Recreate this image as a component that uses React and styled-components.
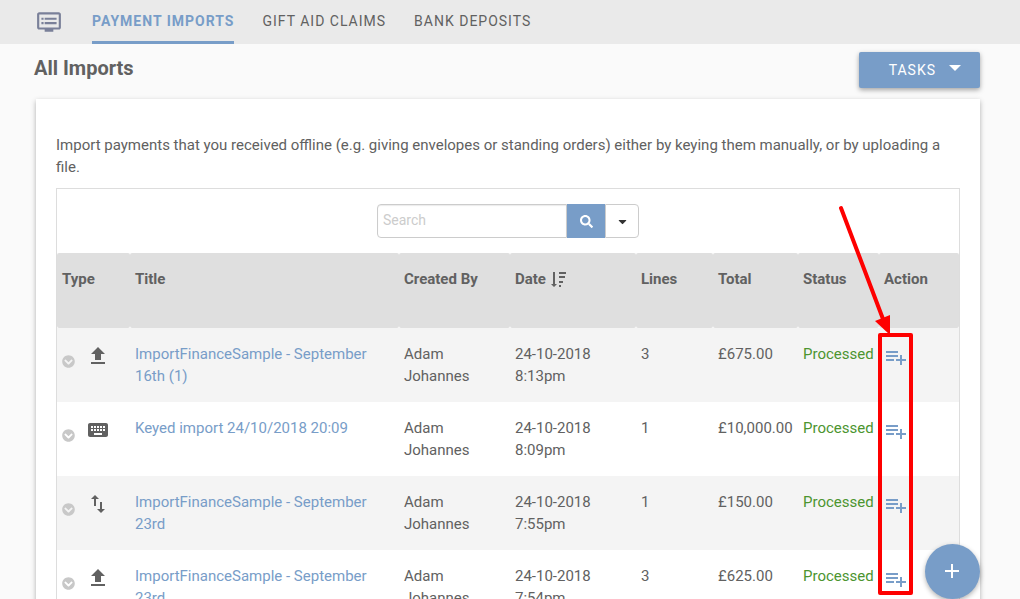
import styled, { createGlobalStyle } from 'styled-components';
import { FaSearch, FaCaretDown, FaChevronCircleDown } from 'react-icons/fa';
import { MdDvr, MdKeyboard, MdImportExport } from 'react-icons/md';

const blue = '#789dc8';

const GlobalStyle = createGlobalStyle`
  * {
    box-sizing: border-box;
  }

  body {
    margin: 0;
    background: #fafafa;
    color: #616161;
    font-family: Roboto, "Liberation Sans", sans-serif;
    font-size: 15px;
    line-height: 22px;
  }

  button, input {
    font-family: inherit;
    font-size: inherit;
  }
`;

// top navigation
const NavBar = styled.nav`
  display: flex;
  align-items: center;
  gap: 28px;
  height: 44px;
  padding: 0 36px;
  background: #eaeaea;
`;

const NavIcon = styled.span`
  display: flex;
  padding-right: 2px;
  color: #7a8099;
`;

const NavLink = styled.a`
  height: 44px;
  line-height: 42px;
  font-size: 14px;
  letter-spacing: 1px;
  text-decoration: none;
  text-transform: uppercase;
  font-weight: ${(props) => (props.$active ? 700 : 400)};
  color: ${(props) => (props.$active ? blue : '#616161')};
  border-bottom: 3px solid ${(props) => (props.$active ? blue : 'transparent')};
`;

const Page = styled.main`
  padding: 8px 40px 0 36px;
`;

const PageHeader = styled.div`
  display: flex;
  justify-content: space-between;
  align-items: flex-start;
  margin-bottom: 11px;
`;

const PageTitle = styled.h1`
  margin: 0 0 0 -2px;
  font-size: 20px;
  line-height: 32px;
  font-weight: 700;
`;

const TasksButton = styled.button`
  display: flex;
  align-items: center;
  gap: 13px;
  height: 36px;
  padding: 0 19px 0 30px;
  border: none;
  border-radius: 2px;
  background: ${blue};
  color: white;
  font-size: 14px;
  letter-spacing: 1px;
  box-shadow: 0 2px 5px rgba(0, 0, 0, 0.35);
`;

const Card = styled.section`
  padding: 35px 20px 20px;
  background: white;
  box-shadow: 0 2px 5px rgba(0, 0, 0, 0.3);
`;

const Intro = styled.p`
  margin: 0 0 10px;
`;

// table and its search bar
const Panel = styled.div`
  position: relative;
  border: 1px solid #ddd;
`;

const SearchForm = styled.form`
  display: flex;
  justify-content: center;
  padding: 15px 0;
`;

const SearchInput = styled.input`
  width: 190px;
  height: 34px;
  padding: 0 5px 2px;
  border: 1px solid #ccc;
  border-radius: 4px 0 0 4px;
  font-size: 14px;
  color: #616161;
  box-shadow: inset 0 1px 1px rgba(0, 0, 0, 0.08);

  &::placeholder {
    color: #ccc;
  }
`;

const SearchButton = styled.button`
  display: flex;
  justify-content: center;
  align-items: center;
  width: 38px;
  height: 34px;
  padding: 0;
  border: none;
  background: ${blue};
  color: white;
`;

const FilterButton = styled(SearchButton)`
  width: 34px;
  border: 1px solid #ccc;
  border-radius: 0 4px 4px 0;
  background: white;
  color: #333;
`;

const Table = styled.table`
  width: 100%;
  table-layout: fixed;
  border-collapse: separate;
  border-spacing: 0;
`;

const Th = styled.th`
  width: ${(props) => props.$width || 'auto'};
  height: 75px;
  padding: 15px 5px;
  border-radius: 2px;
  background: #dfdfdf;
  text-align: left;
  vertical-align: top;
  white-space: nowrap;

  svg {
    vertical-align: middle;
  }
`;

const Row = styled.tr`
  &:nth-child(odd) {
    background: #f4f4f4;
  }
`;

const Td = styled.td`
  height: 74px;
  padding: 15px 5px;
  vertical-align: top;
`;

const TypeCell = styled.div`
  display: flex;
  align-items: flex-start;
  gap: 11px;
  padding-top: 1px;
`;

const ExpandButton = styled.button`
  display: flex;
  margin-top: 11px;
  padding: 0;
  border: none;
  background: none;
  color: #c8c8c8;
`;

const TitleLink = styled.a`
  color: ${blue};
  text-decoration: none;
`;

const Status = styled.span`
  color: #4c9530;
`;

const ActionButton = styled.button`
  display: flex;
  padding: 2px 0 0;
  border: none;
  background: none;
  color: ${blue};
`;

const AddButton = styled.button`
  position: fixed;
  right: 40px;
  bottom: 0;
  display: flex;
  justify-content: center;
  align-items: center;
  width: 55px;
  height: 55px;
  padding: 0;
  border: none;
  border-radius: 50%;
  background: ${blue};
  color: white;
  box-shadow: 0 2px 5px rgba(0, 0, 0, 0.3);
`;

// red marks that point at the action column
const Highlight = styled.div`
  position: absolute;
  top: 144px;
  right: 46px;
  width: 35px;
  height: 262px;
  border: 4px solid #fe0000;
  border-radius: 2px;
`;

const Arrow = styled.svg`
  position: absolute;
  top: 16px;
  right: 68px;
`;

const UploadIcon = () => (
  <svg width="24" height="24" viewBox="0 0 24 24" fill="currentColor">
    <path d="M9 16v-6H5l7-7 7 7h-4v6H9zM5 20v-2h14v2H5z" />
  </svg>
);

const PlaylistIcon = () => (
  <svg width="24" height="24" viewBox="0 0 24 24" fill="currentColor">
    <path d="M2 16h8v-2H2v2zm16-2v-4h-2v4h-4v2h4v4h2v-4h4v-2h-4zM14 6H2v2h12V6zM2 12h12v-2H2v2z" />
  </svg>
);

const SortIcon = () => (
  <svg width="17" height="16" viewBox="0 0 17 16" fill="currentColor">
    <path d="M3 0h2v12h2l-3 3-3-3h2zM9 0h7v2H9zM9 4h6v2H9zM9 9h4v2H9zM9 13h2v2H9z" />
  </svg>
);

const typeIcons = {
  upload: <UploadIcon />,
  keyed: <MdKeyboard size={24} />,
  transfer: <MdImportExport size={24} />,
};

const navItems = ['Payment Imports', 'Gift Aid Claims', 'Bank Deposits'];

const imports = [
  { type: 'upload', title: 'ImportFinanceSample - September 16th (1)', time: '8:13pm', lines: 3, total: '£675.00' },
  { type: 'keyed', title: 'Keyed import 24/10/2018 20:09', time: '8:09pm', lines: 1, total: '£10,000.00' },
  { type: 'transfer', title: 'ImportFinanceSample - September 23rd', time: '7:55pm', lines: 1, total: '£150.00' },
  { type: 'upload', title: 'ImportFinanceSample - September 23rd', time: '7:54pm', lines: 3, total: '£625.00' },
];

export default function App() {
  return (
    <>
      <GlobalStyle />
      <NavBar>
        <NavIcon><MdDvr size={26} /></NavIcon>
        {navItems.map((item, i) => (
          <NavLink key={item} href="#" $active={i === 0}>{item}</NavLink>
        ))}
      </NavBar>
      <Page>
        <PageHeader>
          <PageTitle>All Imports</PageTitle>
          <TasksButton>
            TASKS
            <svg width="12" height="12" viewBox="0 0 12 12" fill="currentColor">
              <path d="M0 1h12L6 7z" />
            </svg>
          </TasksButton>
        </PageHeader>
        <Card>
          <Intro>
            Import payments that you received offline (e.g. giving envelopes or standing orders) either by keying them manually, or by uploading a file.
          </Intro>
          <Panel>
            <SearchForm onSubmit={(e) => e.preventDefault()}>
              <SearchInput type="text" placeholder="Search" aria-label="Search" />
              <SearchButton type="submit" aria-label="Search"><FaSearch size={13} /></SearchButton>
              <FilterButton type="button" aria-label="Filters"><FaCaretDown size={13} /></FilterButton>
            </SearchForm>
            <Table>
              <thead>
                <tr>
                  <Th $width="73px">Type</Th>
                  <Th>Title</Th>
                  <Th $width="111px">Created By</Th>
                  <Th $width="126px">Date <SortIcon /></Th>
                  <Th $width="77px">Lines</Th>
                  <Th $width="85px">Total</Th>
                  <Th $width="81px">Status</Th>
                  <Th $width="80px">Action</Th>
                </tr>
              </thead>
              <tbody>
                {imports.map((item) => (
                  <Row key={item.time}>
                    <Td>
                      <TypeCell>
                        <ExpandButton aria-label="Expand"><FaChevronCircleDown size={13} /></ExpandButton>
                        {typeIcons[item.type]}
                      </TypeCell>
                    </Td>
                    <Td><TitleLink href="#">{item.title}</TitleLink></Td>
                    <Td>Adam Johannes</Td>
                    <Td>24-10-2018 {item.time}</Td>
                    <Td>{item.lines}</Td>
                    <Td>{item.total}</Td>
                    <Td><Status>Processed</Status></Td>
                    <Td><ActionButton aria-label="Add to batch"><PlaylistIcon /></ActionButton></Td>
                  </Row>
                ))}
              </tbody>
            </Table>
            <Highlight />
            <Arrow width="54" height="130" viewBox="0 0 54 130">
              <path d="M4 3L46 114" stroke="#fe0000" strokeWidth="4" strokeLinecap="round" />
              <path d="M38 116l15-6v20z" fill="#fe0000" />
            </Arrow>
          </Panel>
        </Card>
      </Page>
      <AddButton aria-label="Add import">
        <svg width="15" height="15" viewBox="0 0 15 15" fill="none" stroke="currentColor" strokeWidth="2">
          <path d="M7 0v14M0 7h14" />
        </svg>
      </AddButton>
    </>
  );
}
